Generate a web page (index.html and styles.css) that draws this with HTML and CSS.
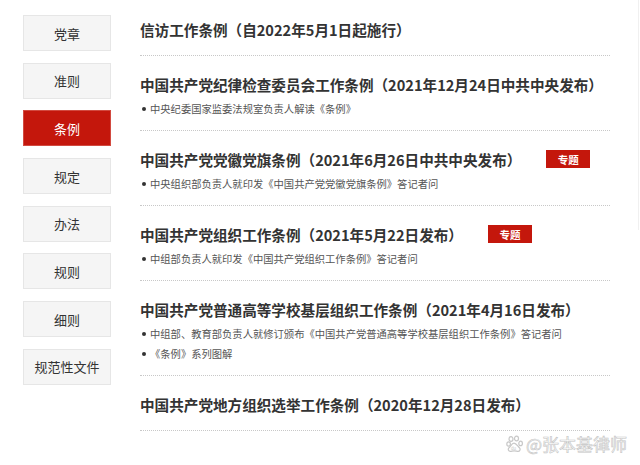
FILE: index.html
```html
<!DOCTYPE html>
<html lang="zh-CN">
<head>
    <meta charset="UTF-8">
    <meta name="viewport" content="width=device-width, initial-scale=1.0">
    <title>党内法规</title>
    <link rel="stylesheet" href="styles.css">
</head>
<body>

    <div class="page">
        <!-- 左侧分类 -->
        <ul class="sidebar">
            <li><a href="#">党章</a></li>
            <li><a href="#">准则</a></li>
            <li class="active"><a href="#">条例</a></li>
            <li><a href="#">规定</a></li>
            <li><a href="#">办法</a></li>
            <li><a href="#">规则</a></li>
            <li><a href="#">细则</a></li>
            <li><a href="#">规范性文件</a></li>
        </ul>

        <!-- 条例列表 -->
        <div class="content">
            <div class="item">
                <h3 class="title">信访工作条例（自2022年5月1日起施行）</h3>
            </div>
            <div class="item">
                <h3 class="title">中国共产党纪律检查委员会工作条例（2021年12月24日中共中央发布）</h3>
                <ul class="subs">
                    <li>中央纪委国家监委法规室负责人解读《条例》</li>
                </ul>
            </div>
            <div class="item">
                <h3 class="title">中国共产党党徽党旗条例（2021年6月26日中共中央发布）<span class="tag">专题</span></h3>
                <ul class="subs">
                    <li>中央组织部负责人就印发《中国共产党党徽党旗条例》答记者问</li>
                </ul>
            </div>
            <div class="item">
                <h3 class="title">中国共产党组织工作条例（2021年5月22日发布）<span class="tag">专题</span></h3>
                <ul class="subs">
                    <li>中组部负责人就印发《中国共产党组织工作条例》答记者问</li>
                </ul>
            </div>
            <div class="item">
                <h3 class="title">中国共产党普通高等学校基层组织工作条例（2021年4月16日发布）</h3>
                <ul class="subs">
                    <li>中组部、教育部负责人就修订颁布《中国共产党普通高等学校基层组织工作条例》答记者问</li>
                    <li>《条例》系列图解</li>
                </ul>
            </div>
            <div class="item">
                <h3 class="title">中国共产党地方组织选举工作条例（2020年12月28日发布）</h3>
            </div>
        </div>
    </div>

    <div class="edge"></div>

    <!-- 水印 -->
    <div class="watermark">
        <svg width="18" height="18" viewBox="0 0 18 18">
            <g fill="none" stroke="#c8c8c8" stroke-width="1.2">
                <ellipse cx="5" cy="4" rx="2" ry="2.4"/>
                <ellipse cx="10.5" cy="3.5" rx="2" ry="2.4"/>
                <ellipse cx="2.6" cy="9" rx="1.8" ry="2.2"/>
                <ellipse cx="14.6" cy="8.4" rx="1.8" ry="2.2"/>
                <path d="M8 8.2c-2.2 0-3.2 3-5 4.6-1.5 1.4-.4 4 1.8 3.6 1.4-.3 2.2-.6 3.4-.6s2 .3 3.4.6c2.2.4 3.300-2.2 1.8-3.6-1.8-1.6-3.2-4.6-5.4-4.6z"/>
            </g>
            <text x="5" y="15" font-size="4.5" fill="#c8c8c8" font-family="Liberation Sans, sans-serif">du</text>
        </svg>
        <span>@张本基律师</span>
    </div>

</body>
</html>
```

FILE: styles.css
```css
body {
    margin: 0;
    padding: 0;
    background-color: #fff;
    font-family: "Noto Sans CJK SC", "Noto Sans", sans-serif;
    color: #333;
}

ul {
    margin: 0;
    padding: 0;
    list-style-type: none;
}

.page {
    display: flex;
    align-items: flex-start;
    padding-left: 23px;
}

.sidebar {
    width: 88px;
    margin-top: 15px;
    display: flex;
    flex-direction: column;
    gap: 11.7px;
}

.sidebar a {
    display: flex;
    justify-content: center;
    align-items: center;
    box-sizing: border-box;
    height: 36px;
    background-color: #f5f5f5;
    border: 1px solid #e6e6e6;
    color: #333;
    font-size: 13px;
    text-decoration: none;
}

.sidebar .active a {
    background-color: #c4170c;
    border-color: #d24a40;
    color: #fff;
}

.content {
    width: 470px;
    margin-left: 29px;
    padding-top: 1px;
}

.item {
    padding: 16px 0 11px;
    border-bottom: 1px dotted #c8c8c8;
}

.title {
    display: flex;
    align-items: center;
    margin: 0 0 3px;
    height: 24px;
    font-size: 14.6px;
    font-weight: bold;
    color: #333;
    white-space: nowrap;
}

.tag {
    display: inline-flex;
    justify-content: center;
    align-items: center;
    width: 44px;
    height: 18px;
    margin-left: 25px;
    background-color: #c4170c;
    color: #fff;
    font-size: 10.5px;
    font-weight: bold;
}

.subs li {
    position: relative;
    padding-left: 10px;
    line-height: 20px;
    font-size: 10.3px;
    color: #555;
    white-space: nowrap;
}

.subs li::before {
    content: "";
    position: absolute;
    left: 2px;
    top: 8px;
    width: 4px;
    height: 4px;
    border-radius: 50%;
    background-color: #333;
}

.edge {
    position: absolute;
    top: 0;
    right: 1px;
    width: 1px;
    height: 230px;
    background-color: #f0f0f0;
}

.watermark {
    position: absolute;
    left: 506px;
    top: 431px;
    display: flex;
    align-items: center;
    gap: 2px;
    font-size: 17px;
    color: #fff;
    -webkit-text-stroke: 0.6px #c4c4c4;
}
```
